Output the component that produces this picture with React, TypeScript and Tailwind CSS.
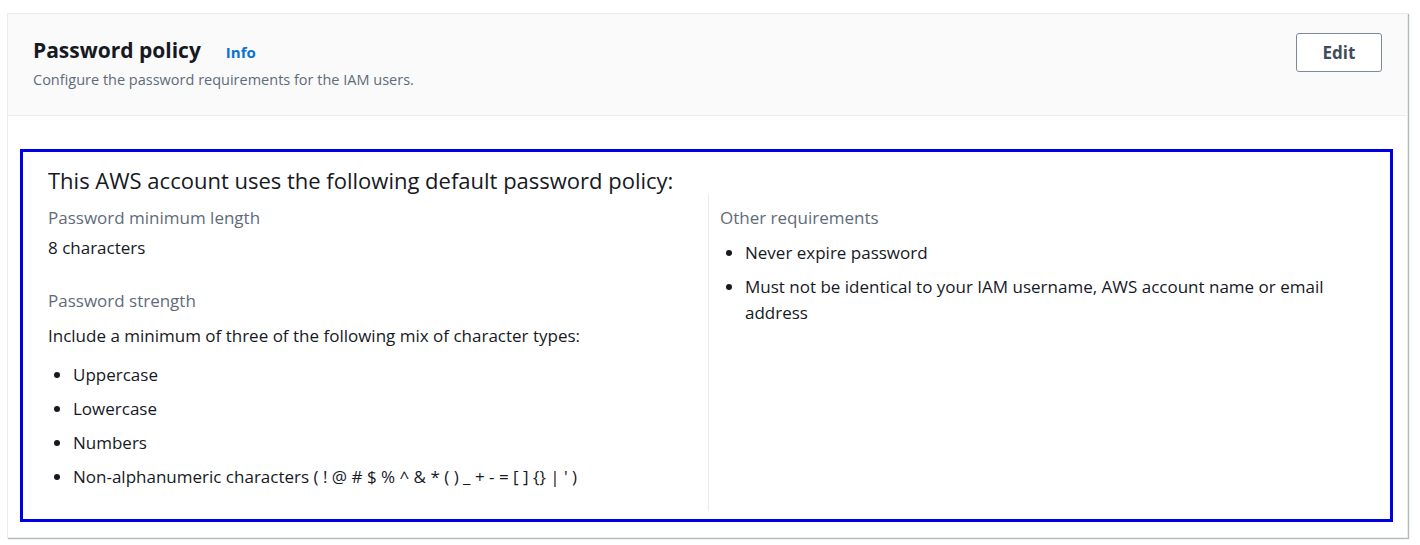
import React from "react";

export default function App() {
  const font = { fontFamily: '"Open Sans", "Noto Sans", Arial, sans-serif' };
  return (
    <div className="w-[1420px] h-[545px] bg-white pt-[13px] pl-[7px]" style={font}>
      <div className="w-[1401px] bg-white border border-[#e9ebed] shadow-[1px_1px_1px_0_rgba(0,28,36,0.3)]">
        <div className="bg-[#fafafa] border-b border-[#e9ebed] flex justify-between items-start pl-[25px] pr-[25px] pt-[19px] pb-[25px]">
          <div className="pt-[3px]">
            <div className="flex items-baseline">
              <h2 className="text-[21px] leading-[28px] font-bold text-[#16191f]">Password policy</h2>
              <span className="ml-[25px] text-[15px] font-bold text-[#0972d3]">Info</span>
            </div>
            <p className="mt-[6px] text-[14.5px] leading-[20px] text-[#5f6b7a]">
              Configure the password requirements for the IAM users.
            </p>
          </div>
          <button className="w-[86px] h-[39px] border border-[#7d8998] rounded-[3px] bg-white text-[17px] font-bold text-[#414d5c]">
            Edit
          </button>
        </div>
        <div className="pl-[12px] pr-[14px] pt-[33px] pb-[15px]">
          <div className="border-[3px] border-[#0000e6] pl-[25px] pr-[22px] pt-[14px] pb-[8px] text-[#16191f]">
            <h3 className="text-[22px] leading-[28px]">
              This AWS account uses the following default password policy:
            </h3>
            <div className="grid grid-cols-2 text-[17px]">
              <div className="pt-[12px] pb-[21px]">
                <div className="leading-[24px] text-[#5f6b7a]">Password minimum length</div>
                <div className="mt-[6px] leading-[24px]">8 characters</div>
                <div className="mt-[29px] leading-[24px] text-[#5f6b7a]">Password strength</div>
                <div className="mt-[11px] leading-[24px]">
                  Include a minimum of three of the following mix of character types:
                </div>
                <ul className="mt-[14px] list-disc pl-[25px] flex flex-col gap-[8px] leading-[26px]">
                  <li>Uppercase</li>
                  <li>Lowercase</li>
                  <li>Numbers</li>
                  <li>Non-alphanumeric characters ( ! @ # $ % ^ &amp; * ( ) _ + - = [ ] {"{}"} | ' )</li>
                </ul>
              </div>
              <div className="border-l border-[#e9ebed] pl-[11px] pt-[12px]">
                <div className="leading-[24px] text-[#5f6b7a]">Other requirements</div>
                <ul className="mt-[10px] list-disc pl-[25px] flex flex-col gap-[8px] leading-[26px]">
                  <li>Never expire password</li>
                  <li>Must not be identical to your IAM username, AWS account name or email address</li>
                </ul>
              </div>
            </div>
          </div>
        </div>
      </div>
    </div>
  );
}
